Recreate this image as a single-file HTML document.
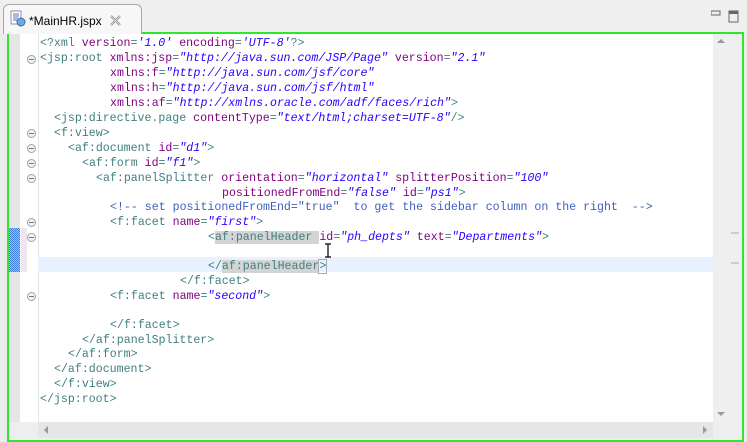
<!DOCTYPE html>
<html><head><meta charset="utf-8"><style>
body{margin:0;width:747px;height:442px;background:#ececec;position:relative;overflow:hidden;font-family:"Liberation Sans",sans-serif}
.tabbar{position:absolute;left:0;top:0;width:747px;height:33px;background:#efefef}
.tab{position:absolute;left:3px;top:4px;width:137px;height:29px;background:#f7f7f7;border:1px solid #a8a8a8;border-bottom:none;border-radius:6px 6px 0 0}
.tabtxt{position:absolute;left:25px;top:9px;font-size:12px;color:#000}
.frame{position:absolute;left:7px;top:32px;width:733px;height:406px;border:2px solid #2ee62e;background:#eeeeee}
.ed{position:absolute;left:38px;top:34px;width:675px;height:388px;background:#fff}
.fold{position:absolute;left:20px;top:34px;width:18px;height:388px;background:#fff;border-right:1px solid #e4e4e4}
.line{position:absolute;font-family:"Liberation Mono",monospace;font-size:11.6px;white-space:pre;line-height:15px;color:#3f7f7f}
.a{color:#7f007f}.v{color:#2a00ff;font-style:italic}.c{color:#3f5fbf}
.hl{background:#d4d4d4}
.fi{position:absolute;left:27px;width:9px;height:9px;border:1px solid #98a4b0;border-radius:50%;background:#f0f3f6;box-sizing:border-box}
.fi:after{content:"";position:absolute;left:1px;right:1px;top:3px;height:1px;background:#6a7c8c}
</style></head><body>
<div class="tabbar"></div>
<div class="frame"></div>
<div class="tab">
<svg style="position:absolute;left:6px;top:5px" width="16" height="17"><rect x="1" y="1" width="10" height="13" fill="#fff" stroke="#8a94a8"/><path d="M3 4h6M3 6h6M3 8h5M3 10h4" stroke="#5a7ab0"/><circle cx="11" cy="12" r="4" fill="#6fa8dc" stroke="#3a6aa0"/></svg>
<span class="tabtxt">*MainHR.jspx</span>
<svg style="position:absolute;left:106px;top:10px" width="11" height="11"><path d="M1 1L10 10M10 1L1 10" stroke="#777" stroke-width="2"/><path d="M1 1L10 10M10 1L1 10" stroke="#fff" stroke-width="0.7"/></svg>
</div>
<svg style="position:absolute;left:711px;top:10px" width="30" height="16"><rect x="0" y="1" width="9" height="4" fill="none" stroke="#666"/><rect x="18" y="1" width="9" height="11" fill="none" stroke="#666"/><rect x="18" y="1" width="9" height="3" fill="#666"/></svg>
<div class="ed"></div>
<div class="fold"></div>
<div style="position:absolute;left:9px;top:34px;width:11px;height:388px;background:#e6e6e6"></div>
<div style="position:absolute;left:9px;top:228px;width:11px;height:44px;background:repeating-conic-gradient(#3d7de0 0 25%,#9ec2f5 0 50%) 0 0/2px 2px"></div>
<div style="position:absolute;left:21px;top:228px;width:6px;height:44px;background:#efe4f0"></div>
<div style="position:absolute;left:38px;top:257px;width:675px;height:15px;background:#e8f2fe"></div>
<div style="position:absolute;left:714px;top:34px;width:26px;height:388px;background:#efefef"></div>
<div style="position:absolute;left:731px;top:232px;width:8px;height:2px;background:#ccc"></div>
<div style="position:absolute;left:731px;top:262px;width:8px;height:2px;background:#ccc"></div>
<svg style="position:absolute;left:717px;top:38px" width="8" height="6"><path d="M0 5L4 1L8 5Z" fill="#999"/></svg>
<svg style="position:absolute;left:717px;top:411px" width="8" height="6"><path d="M0 1L4 5L8 1Z" fill="#999"/></svg>
<div style="position:absolute;left:38px;top:422px;width:675px;height:16px;background:#e6e6e6"></div>
<svg style="position:absolute;left:43px;top:426px" width="6" height="8"><path d="M5 0L1 4L5 8Z" fill="#999"/></svg>
<svg style="position:absolute;left:702px;top:426px" width="6" height="8"><path d="M1 0L5 4L1 8Z" fill="#999"/></svg>

<div class="fi" style="top:55px"></div>
<div class="fi" style="top:129px"></div>
<div class="fi" style="top:144px"></div>
<div class="fi" style="top:159px"></div>
<div class="fi" style="top:174px"></div>
<div class="fi" style="top:218px"></div>
<div class="fi" style="top:233px"></div>
<div class="fi" style="top:292px"></div>

<div class="line" style="left:40px;top:36px">&lt;?xml <span class="a">version</span>=<span class="v">'1.0'</span> <span class="a">encoding</span>=<span class="v">'UTF-8'</span>?&gt;</div>
<div class="line" style="left:40px;top:51px">&lt;jsp:root <span class="a">xmlns:jsp</span>=<span class="v">"http://java.sun.com/JSP/Page"</span> <span class="a">version</span>=<span class="v">"2.1"</span></div>
<div class="line" style="left:110px;top:66px"><span class="a">xmlns:f</span>=<span class="v">"http://java.sun.com/jsf/core"</span></div>
<div class="line" style="left:110px;top:81px"><span class="a">xmlns:h</span>=<span class="v">"http://java.sun.com/jsf/html"</span></div>
<div class="line" style="left:110px;top:96px"><span class="a">xmlns:af</span>=<span class="v">"http://xmlns.oracle.com/adf/faces/rich"</span>&gt;</div>
<div class="line" style="left:54px;top:111px">&lt;jsp:directive.page <span class="a">contentType</span>=<span class="v">"text/html;charset=UTF-8"</span>/&gt;</div>
<div class="line" style="left:54px;top:126px">&lt;f:view&gt;</div>
<div class="line" style="left:68px;top:141px">&lt;af:document <span class="a">id</span>=<span class="v">"d1"</span>&gt;</div>
<div class="line" style="left:82px;top:156px">&lt;af:form <span class="a">id</span>=<span class="v">"f1"</span>&gt;</div>
<div class="line" style="left:96px;top:171px">&lt;af:panelSplitter <span class="a">orientation</span>=<span class="v">"horizontal"</span> <span class="a">splitterPosition</span>=<span class="v">"100"</span></div>
<div class="line" style="left:222px;top:186px"><span class="a">positionedFromEnd</span>=<span class="v">"false"</span> <span class="a">id</span>=<span class="v">"ps1"</span>&gt;</div>
<div class="line c" style="left:110px;top:200px">&lt;!-- set positionedFromEnd="true"  to get the sidebar column on the right  --&gt;</div>
<div class="line" style="left:110px;top:215px">&lt;f:facet <span class="a">name</span>=<span class="v">"first"</span>&gt;</div>
<div class="line" style="left:208px;top:230px">&lt;<span class="hl">af:panelHeader </span><span class="a">id</span>=<span class="v">"ph_depts"</span> <span class="a">text</span>=<span class="v">"Departments"</span>&gt;</div>
<div class="line" style="left:208px;top:259px">&lt;/<span class="hl">af:panelHeader</span><span style="outline:1px solid #aaa">&gt;</span></div>
<div class="line" style="left:180px;top:274px">&lt;/f:facet&gt;</div>
<div class="line" style="left:110px;top:289px">&lt;f:facet <span class="a">name</span>=<span class="v">"second"</span>&gt;</div>
<div class="line" style="left:110px;top:318px">&lt;/f:facet&gt;</div>
<div class="line" style="left:82px;top:333px">&lt;/af:panelSplitter&gt;</div>
<div class="line" style="left:68px;top:347px">&lt;/af:form&gt;</div>
<div class="line" style="left:54px;top:362px">&lt;/af:document&gt;</div>
<div class="line" style="left:54px;top:377px">&lt;/f:view&gt;</div>
<div class="line" style="left:40px;top:392px">&lt;/jsp:root&gt;</div>
<svg style="position:absolute;left:324px;top:243px" width="8" height="16"><path d="M1 1h6M4 1v13M1 14h6" stroke="#000" stroke-width="1.2" fill="none"/></svg>
</body></html>
